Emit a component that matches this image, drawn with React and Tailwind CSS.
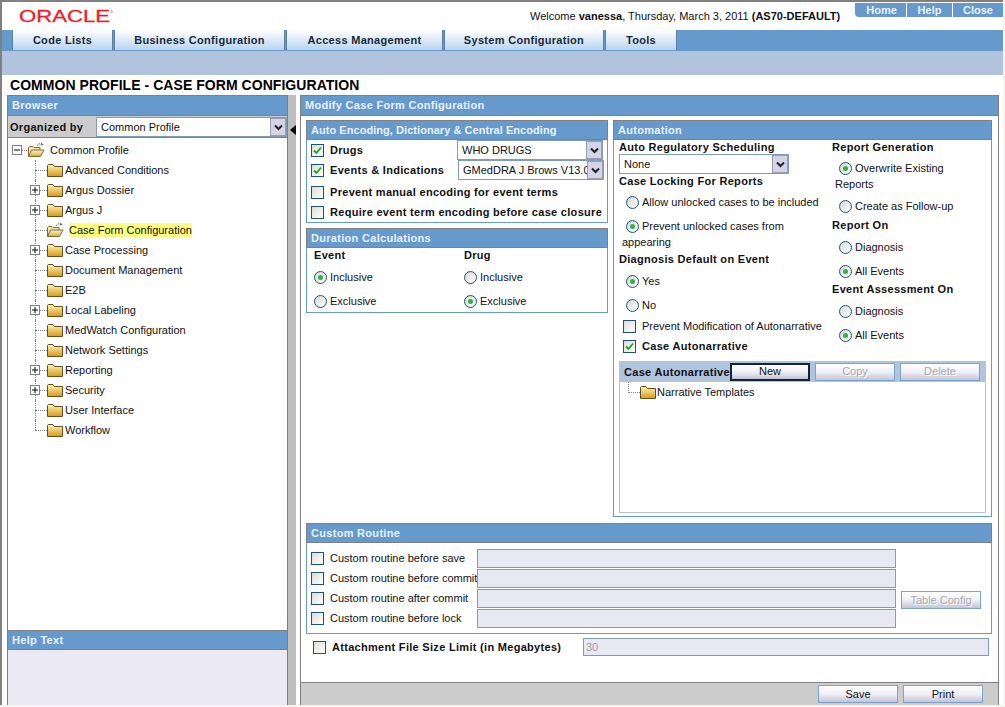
import { useId } from 'react';

const treeItems = [
  { label: 'Advanced Conditions' },
  { label: 'Argus Dossier', plus: true },
  { label: 'Argus J', plus: true },
  { label: 'Case Form Configuration', active: true },
  { label: 'Case Processing', plus: true },
  { label: 'Document Management' },
  { label: 'E2B' },
  { label: 'Local Labeling', plus: true },
  { label: 'MedWatch Configuration' },
  { label: 'Network Settings' },
  { label: 'Reporting', plus: true },
  { label: 'Security', plus: true },
  { label: 'User Interface' },
  { label: 'Workflow', last: true },
];

const routines = [
  'Custom routine before save',
  'Custom routine before commit',
  'Custom routine after commit',
  'Custom routine before lock',
];

function Folder() {
  const id = useId();
  return (
    <svg width="16" height="13" viewBox="0 0 16 13" className="shrink-0">
      <defs>
        <linearGradient id={id} x1="0" y1="0" x2="0" y2="1">
          <stop offset="0" stopColor="#fff3b8" />
          <stop offset="1" stopColor="#d99a10" />
        </linearGradient>
      </defs>
      <path d="M0.5 12.5V1.5L1.5 0.5H6L7.5 2.5H15.5V12.5Z" fill={`url(#${id})`} stroke="#5f5026" />
    </svg>
  );
}

function OpenFolder() {
  const id = useId();
  return (
    <svg width="18" height="16" viewBox="0 0 18 16" className="shrink-0">
      <defs>
        <linearGradient id={id} x1="0" y1="0" x2="0" y2="1">
          <stop offset="0" stopColor="#fff6c8" />
          <stop offset="1" stopColor="#e0a830" />
        </linearGradient>
      </defs>
      <path d="M1.5 14.5V5.5L2.5 4.5H6L7 5.5H13V8" fill="#f7e6a8" stroke="#7a6a3a" />
      <path d="M1.5 14.5L4.5 8H17L13.5 14.5Z" fill={`url(#${id})`} stroke="#7a6a3a" />
      <path d="M10 4C11 1.5 13.5 1 15.5 2.5" fill="none" stroke="#666" strokeDasharray="1.5 1" />
      <path d="M14.5 0.5L16.5 3L13.5 3.5Z" fill="#666" />
    </svg>
  );
}

function Box({ sign }) {
  return (
    <div className="flex h-[10px] w-[10px] items-center justify-center border border-[#808080] bg-white">
      <svg width="8" height="8" viewBox="0 0 8 8">
        <path d={sign === '+' ? 'M1 4H7M4 1V7' : 'M1 4H7'} stroke="#000" strokeWidth="1" fill="none" />
      </svg>
    </div>
  );
}

function Check({ on }) {
  return (
    <div className="flex h-[13px] w-[13px] shrink-0 items-center justify-center border border-[#1c5180] bg-gradient-to-br from-[#dcdcd7] to-white">
      {on && (
        <svg width="9" height="9" viewBox="0 0 9 9">
          <path d="M1 4.5L3.5 7L8 1.5" stroke="#21a121" strokeWidth="1.8" fill="none" />
        </svg>
      )}
    </div>
  );
}

function Radio({ on }) {
  return (
    <div className="flex h-[13px] w-[13px] shrink-0 items-center justify-center rounded-full border border-[#1c5180] bg-gradient-to-br from-[#d8d8d2] to-white">
      {on && <div className="h-[5px] w-[5px] rounded-full bg-[#2fb24a]" />}
    </div>
  );
}

function Opt({ on, label, className = '' }) {
  return (
    <div className={`flex h-[24px] items-center gap-[3px] ${className}`}>
      <Radio on={on} />
      <span className="whitespace-nowrap pt-px">{label}</span>
    </div>
  );
}

function Select({ value, className = '' }) {
  return (
    <div className={`flex h-[20px] items-center border border-[#7f9db9] bg-white font-normal tracking-normal ${className}`}>
      <span className="min-w-0 flex-1 overflow-hidden whitespace-nowrap pl-[4px]">{value}</span>
      <div className="flex h-[18px] w-[16px] shrink-0 items-center justify-center border border-[#9a9ab0] bg-[#d4d4e6]">
        <svg width="9" height="7" viewBox="0 0 9 7">
          <path d="M1 1.5L4.5 5L8 1.5" stroke="#222" strokeWidth="2" fill="none" />
        </svg>
      </div>
    </div>
  );
}

function Btn({ label, disabled, focus, className = '' }) {
  return (
    <div
      className={`flex h-[18px] w-[80px] shrink-0 items-center justify-center bg-gradient-to-b from-white via-[#f0f0f6] to-[#c4c4d6] font-normal tracking-normal ${
        focus ? 'border-2 border-[#10243a]' : 'border border-[#7aa4cf]'
      } ${disabled ? 'text-[#a8a8a8] [text-shadow:1px_1px_0_#fff]' : ''} ${className}`}
    >
      {label}
    </div>
  );
}

function Bar({ children, className = '' }) {
  return (
    <div className={`flex items-center bg-[#6699cc] font-bold tracking-[0.3px] text-[#eaf2fa] ${className}`}>{children}</div>
  );
}

function Section({ title, titleClass = '', className = '', children }) {
  return (
    <div className={`border border-[#6699cc] bg-white ${className}`}>
      <Bar className={`-mx-px -mt-px h-[20px] border-x border-t border-b border-[#808080] pl-[4px] ${titleClass}`}>{title}</Bar>
      {children}
    </div>
  );
}

function Field({ value, className = '' }) {
  return (
    <div className={`flex items-center border border-[#7f9db9] bg-[#e8e8f2] pl-[2px] text-[#a0a0a0] ${className}`}>
      {value}
    </div>
  );
}

export default function App() {
  return (
    <div className="h-[707px] w-[1005px] overflow-hidden bg-[#f6f5ee] font-['Liberation_Sans',Arial,sans-serif] text-[11px] text-[#111]">
      <div className="flex h-[705px] w-[1003px] flex-col border-l-2 border-t-2 border-[#808080] bg-white">
        {/* top strip */}
        <div className="flex h-[28px] shrink-0">
          <div className="w-[528px] pl-[16px] pt-[6px]">
            <svg width="100" height="16" viewBox="0 0 100 16">
              <text
                x="1"
                y="14"
                textLength="91"
                lengthAdjust="spacingAndGlyphs"
                fill="#ee1c25"
                stroke="#ee1c25"
                strokeWidth="0.3"
                fontFamily="Liberation Sans"
                fontSize="17"
              >
                ORACLE
              </text>
              <circle cx="93.5" cy="3.5" r="1" fill="none" stroke="#ee1c25" strokeWidth="0.4" />
            </svg>
          </div>
          <div className="w-[325px] whitespace-nowrap pt-[6px]">
            Welcome <b>vanessa</b>, Thursday, March 3, 2011 <b>(AS70-DEFAULT)</b>
          </div>
          <div className="flex h-[15px] w-[148px] pt-px font-bold text-[#eaf2fa]">
            <div className="flex w-[51px] items-center justify-center rounded-bl-[4px] bg-[#6699cc] pl-[2px]">Home</div>
            <div className="ml-px flex w-[45px] items-center justify-center bg-[#6699cc]">Help</div>
            <div className="ml-px flex flex-1 items-center justify-center bg-[#6699cc]">Close</div>
          </div>
        </div>

        {/* main menu */}
        <div className="flex h-[21px] shrink-0 items-end gap-px bg-[#6699cc] pb-px pl-[10px]">
          {[
            ['Code Lists', 'w-[101px]'],
            ['Business Configuration', 'w-[171px]'],
            ['Access Management', 'w-[157px]'],
            ['System Configuration', 'w-[160px]'],
            ['Tools', 'w-[72px]'],
          ].map(([label, w]) => (
            <div
              key={label}
              className={`flex h-[20px] items-center justify-center border-x border-[#5a80a8] bg-gradient-to-b from-white to-[#b8d4ee] pt-px font-bold tracking-[0.3px] text-[#1a2a3a] ${w}`}
            >
              {label}
            </div>
          ))}
        </div>
        <div className="h-[24px] shrink-0 bg-[#b0c4de]" />

        <div className="flex h-[20px] shrink-0 items-center pl-[8px] text-[14px] font-bold tracking-[0.05px] text-black">
          COMMON PROFILE - CASE FORM CONFIGURATION
        </div>

        <div className="flex h-[610px] shrink-0">
          {/* left column */}
          <div className="ml-[5px] flex w-[281px] shrink-0 flex-col border border-b-0 border-[#808080]">
            <Bar className="h-[19px] pl-[4px]">Browser</Bar>
            <div className="flex h-[23px] shrink-0 items-center border-y border-[#808080] bg-[#cccccc] pl-[2px] pt-px font-bold tracking-[0.3px]">
              <span className="w-[86px]">Organized by</span>
              <Select value="Common Profile" className="w-[191px]" />
            </div>
            <div className="flex-1 bg-white pl-[4px] pt-[2px]">
              <div className="flex h-[20px] items-center">
                <Box sign="-" />
                <div className="w-[5px] border-b border-dotted border-[#808080]" />
                <OpenFolder />
                <span className="ml-[5px]">Common Profile</span>
              </div>
              {treeItems.map((item) => (
                <div key={item.label} className="flex h-[20px] items-center">
                  <div className="relative ml-[23px] h-full w-[12px] shrink-0">
                    <div
                      className={`border-l border-dotted border-[#808080] ${item.last ? 'h-1/2' : 'h-full'}`}
                    />
                    <div className="absolute left-0 top-[10px] w-[12px] border-b border-dotted border-[#808080]" />
                    {item.plus && (
                      <div className="absolute left-[-5px] top-[5px]">
                        <Box sign="+" />
                      </div>
                    )}
                  </div>
                  {item.active ? (
                    <div className="-ml-px">
                      <OpenFolder />
                    </div>
                  ) : (
                    <Folder />
                  )}
                  {item.active ? (
                    <span className="ml-[5px] bg-[#ffff80] leading-[14px]">{item.label}</span>
                  ) : (
                    <span className="ml-[2px]">{item.label}</span>
                  )}
                </div>
              ))}
            </div>
            <Bar className="h-[20px] border-y border-[#808080] pl-[4px]">Help Text</Bar>
            <div className="h-[55px] shrink-0 bg-[#ebe9f3]" />
          </div>

          {/* splitter */}
          <div className="w-[8px] shrink-0 bg-[#bdbdbd] pl-[2px] pt-[30px]">
            <svg width="6" height="10" viewBox="0 0 6 10">
              <path d="M6 0V10L0 5Z" fill="#000" />
            </svg>
          </div>

          {/* right column */}
          <div className="ml-[4px] flex w-[699px] shrink-0 flex-col border border-b-0 border-[#808080]">
            <Bar className="h-[19px] pl-[4px]">Modify Case Form Configuration</Bar>
            <div className="flex-1 border-t border-[#808080] bg-white">
              <div className="flex gap-[5px] pl-[5px] pt-[4px]">
                <div className="w-[302px] shrink-0">
                  <Section
                    title="Auto Encoding, Dictionary & Central Encoding"
                    titleClass="tracking-[0.05px]"
                    className="h-[103px]"
                  >
                    <div className="flex h-[20px] items-center pl-[4px] font-bold tracking-[0.3px]">
                      <Check on />
                      <span className="ml-[6px] w-[127px]">Drugs</span>
                      <Select value="WHO DRUGS" className="w-[146px]" />
                    </div>
                    <div className="flex h-[20px] items-center pl-[4px] font-bold tracking-[0.3px]">
                      <Check on />
                      <span className="ml-[6px] w-[128px]">Events &amp; Indications</span>
                      <Select value="GMedDRA J Brows V13.0" className="w-[146px]" />
                    </div>
                    <div className="mt-[2px] flex h-[20px] items-center pl-[4px] font-bold tracking-[0.3px]">
                      <Check />
                      <span className="ml-[6px] whitespace-nowrap">Prevent manual encoding for event terms</span>
                    </div>
                    <div className="flex h-[20px] items-center pl-[4px] font-bold tracking-[0.3px]">
                      <Check />
                      <span className="ml-[6px] whitespace-nowrap">Require event term encoding before case closure</span>
                    </div>
                  </Section>
                  <Section title="Duration Calculations" className="mt-[5px] h-[85px]">
                    <div className="flex">
                      <div className="w-[150px] pl-[7px]">
                        <div className="flex h-[14px] items-center font-bold tracking-[0.3px]">Event</div>
                        <Opt on label="Inclusive" className="mt-[3px]" />
                        <Opt label="Exclusive" />
                      </div>
                      <div className="pl-[7px]">
                        <div className="flex h-[14px] items-center font-bold tracking-[0.3px]">Drug</div>
                        <Opt label="Inclusive" className="mt-[3px]" />
                        <Opt on label="Exclusive" />
                      </div>
                    </div>
                  </Section>
                </div>

                <Section title="Automation" className="h-[397px] w-[379px] shrink-0">
                  <div className="flex pl-[5px]">
                    <div className="w-[213px] shrink-0">
                      <div className="flex h-[14px] items-center font-bold tracking-[0.3px]">Auto Regulatory Scheduling</div>
                      <Select value="None" className="w-[170px]" />
                      <div className="flex h-[14px] items-center font-bold tracking-[0.3px]">Case Locking For Reports</div>
                      <Opt label="Allow unlocked cases to be included" className="ml-[7px] mt-[2px]" />
                      <Opt on label="Prevent unlocked cases from" className="ml-[7px]" />
                      <div className="-mt-[2px] flex h-[12px] items-center pl-[3px]">appearing</div>
                      <div className="mt-[4px] flex h-[14px] items-center font-bold tracking-[0.3px]">Diagnosis Default on Event</div>
                      <Opt on label="Yes" className="ml-[7px] mt-[3px]" />
                      <Opt label="No" className="ml-[7px]" />
                      <div className="-mt-px flex h-[20px] items-center gap-[6px] pl-[4px]">
                        <Check />
                        <span className="whitespace-nowrap">Prevent Modification of Autonarrative</span>
                      </div>
                      <div className="flex h-[20px] items-center gap-[6px] pl-[4px] font-bold tracking-[0.3px]">
                        <Check on />
                        <span>Case Autonarrative</span>
                      </div>
                    </div>
                    <div className="flex-1">
                      <div className="flex h-[14px] items-center font-bold tracking-[0.3px]">Report Generation</div>
                      <Opt on label="Overwrite Existing" className="ml-[7px] mt-[2px]" />
                      <div className="-mt-[2px] flex h-[12px] items-center pl-[3px]">Reports</div>
                      <Opt label="Create as Follow-up" className="ml-[7px] mt-[4px]" />
                      <div className="flex h-[14px] items-center font-bold tracking-[0.3px]">Report On</div>
                      <Opt label="Diagnosis" className="ml-[7px] mt-[3px]" />
                      <Opt on label="All Events" className="ml-[7px]" />
                      <div className="-mt-px flex h-[14px] items-center font-bold tracking-[0.3px]">Event Assessment On</div>
                      <Opt label="Diagnosis" className="ml-[7px] mt-[3px]" />
                      <Opt on label="All Events" className="ml-[7px]" />
                    </div>
                  </div>
                  <div className="mx-[5px] mt-[5px] w-[367px]">
                    <div className="flex h-[21px] items-center bg-[#b0c4de] pl-[5px] font-bold tracking-[0.3px]">
                      <span className="w-[106px] whitespace-nowrap pt-px">Case Autonarrative</span>
                      <Btn label="New" focus />
                      <Btn label="Copy" disabled className="ml-[5px]" />
                      <Btn label="Delete" disabled className="ml-[5px]" />
                    </div>
                    <div className="h-[131px] border border-t-0 border-[#b0c4de] bg-white pl-[8px]">
                      <div className="flex h-[20px] items-center">
                        <div className="h-[11px] w-[12px] -translate-y-[5px] border-b border-l border-dotted border-[#808080]" />
                        <Folder />
                        <span className="ml-px">Narrative Templates</span>
                      </div>
                    </div>
                  </div>
                </Section>
              </div>

              <Section title="Custom Routine" className="ml-[5px] mt-[6px] h-[111px] w-[686px]">
                <div className="flex pl-[4px] pt-[5px]">
                  <div>
                    {routines.map((label) => (
                      <div key={label} className="flex h-[20px] items-center">
                        <Check />
                        <span className="ml-[6px] w-[147px] whitespace-nowrap">{label}</span>
                        <Field className="h-[19px] w-[419px]" />
                      </div>
                    ))}
                  </div>
                  <div className="flex flex-col justify-end pb-[19px] pl-[5px]">
                    <Btn label="Table Config" disabled />
                  </div>
                </div>
              </Section>

              <div className="mt-[4px] flex h-[18px] items-center pl-[12px]">
                <Check />
                <span className="ml-[6px] w-[251px] whitespace-nowrap font-bold tracking-[0.3px]">
                  Attachment File Size Limit (in Megabytes)
                </span>
                <Field value="30" className="h-[18px] w-[406px]" />
              </div>
            </div>
            <div className="flex h-[23px] shrink-0 items-center justify-end gap-[5px] border-t border-[#808080] bg-[#cccccc] pr-[15px]">
              <Btn label="Save" />
              <Btn label="Print" />
            </div>
          </div>
        </div>
      </div>
    </div>
  );
}
